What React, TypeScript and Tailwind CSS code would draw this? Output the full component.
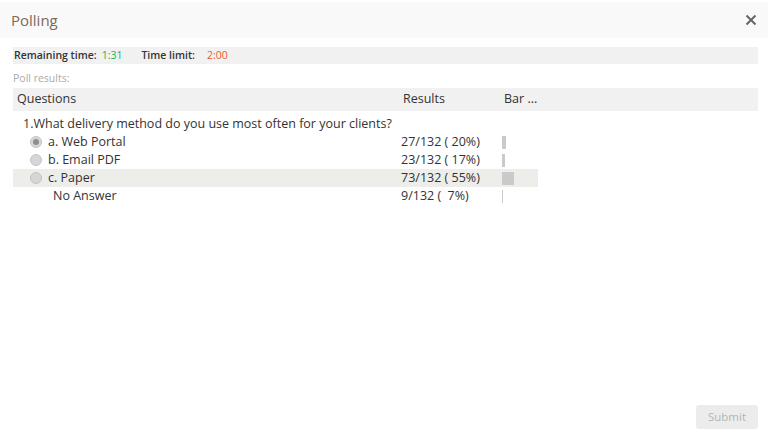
import React from 'react'

type Option = {
  label: string
  result: string
  bar: number
  checked?: boolean
  highlight?: boolean
  radio?: boolean
}

const options: Option[] = [
  { label: 'a. Web Portal', result: '27/132 ( 20%)', bar: 4, checked: true, radio: true },
  { label: 'b. Email PDF', result: '23/132 ( 17%)', bar: 3, radio: true },
  { label: 'c. Paper', result: '73/132 ( 55%)', bar: 12, highlight: true, radio: true },
  { label: 'No Answer', result: '9/132 (  7%)', bar: 1 }
]

function Radio({ checked }: { checked?: boolean }) {
  return (
    <span className="w-[12px] h-[12px] rounded-full bg-[#d6d6d6] border border-[#c4c4c4] flex items-center justify-center shrink-0">
      {checked && <span className="w-[6px] h-[6px] rounded-full bg-[#8e8e8e]" />}
    </span>
  )
}

export default function App() {
  return (
    <div
      className="w-[771px] h-[438px] bg-white relative text-[#333]"
      style={{ fontFamily: '"Open Sans", "Noto Sans", Arial, sans-serif' }}
    >
      {/* header */}
      <div className="mt-[2px] mr-[3px] h-[36px] bg-[#f9f9f9] flex items-center justify-between pl-[11px] pr-[10px]">
        <span className="text-[15px] text-[#7b6a5a] mt-px">Polling</span>
        <svg width="12" height="12" viewBox="0 0 12 12" className="mr-[1px]">
          <path d="M1.5 1.5 L10.5 10.5 M10.5 1.5 L1.5 10.5" stroke="#666" strokeWidth="2" />
        </svg>
      </div>

      <div className="px-[13px]">
        {/* timer */}
        <div className="mt-[9px] h-[17px] bg-[#f1f1f1] flex items-center text-[10.5px] font-semibold pl-px">
          <span className="text-[#333]">Remaining time:</span>
          <span className="ml-[5px] text-[#22b14c] font-normal">1:31</span>
          <span className="ml-[19px] text-[#333]">Time limit:</span>
          <span className="ml-[12px] text-[#f25a2a] font-normal">2:00</span>
        </div>

        <div className="mt-[7px] text-[10.5px] text-[#aaa] leading-[14px]">Poll results:</div>

        {/* table header */}
        <div className="mt-[3px] h-[23px] bg-[#f1f1f1] flex items-center text-[12.5px] text-[#333]">
          <span className="pl-[4px] w-[390px]">Questions</span>
          <span className="w-[101px]">Results</span>
          <span>Bar ...</span>
        </div>

        <div className="w-[525px] mt-[4px] text-[12.5px]">
          <div className="h-[18px] flex items-center pl-[10px]">
            1.What delivery method do you use most often for your clients?
          </div>
          {options.map((o) => (
            <div
              key={o.label}
              className={`h-[18px] flex items-center ${o.highlight ? 'bg-[#ededea]' : ''}`}
            >
              <div className="w-[388px] flex items-center pl-[17px]">
                {o.radio ? <Radio checked={o.checked} /> : <span className="w-[12px]" />}
                <span className={o.radio ? 'ml-[6px]' : 'ml-[11px]'}>{o.label}</span>
              </div>
              <span className="w-[101px] whitespace-pre">{o.result}</span>
              <span className="h-[13px] bg-[#cacaca]" style={{ width: o.bar }} />
            </div>
          ))}
        </div>
      </div>

      <button className="absolute right-[13px] bottom-[11px] w-[62px] h-[24px] rounded-[3px] bg-[#ececec] text-[11.5px] text-[#b5b5b5]">
        Submit
      </button>
    </div>
  )
}
